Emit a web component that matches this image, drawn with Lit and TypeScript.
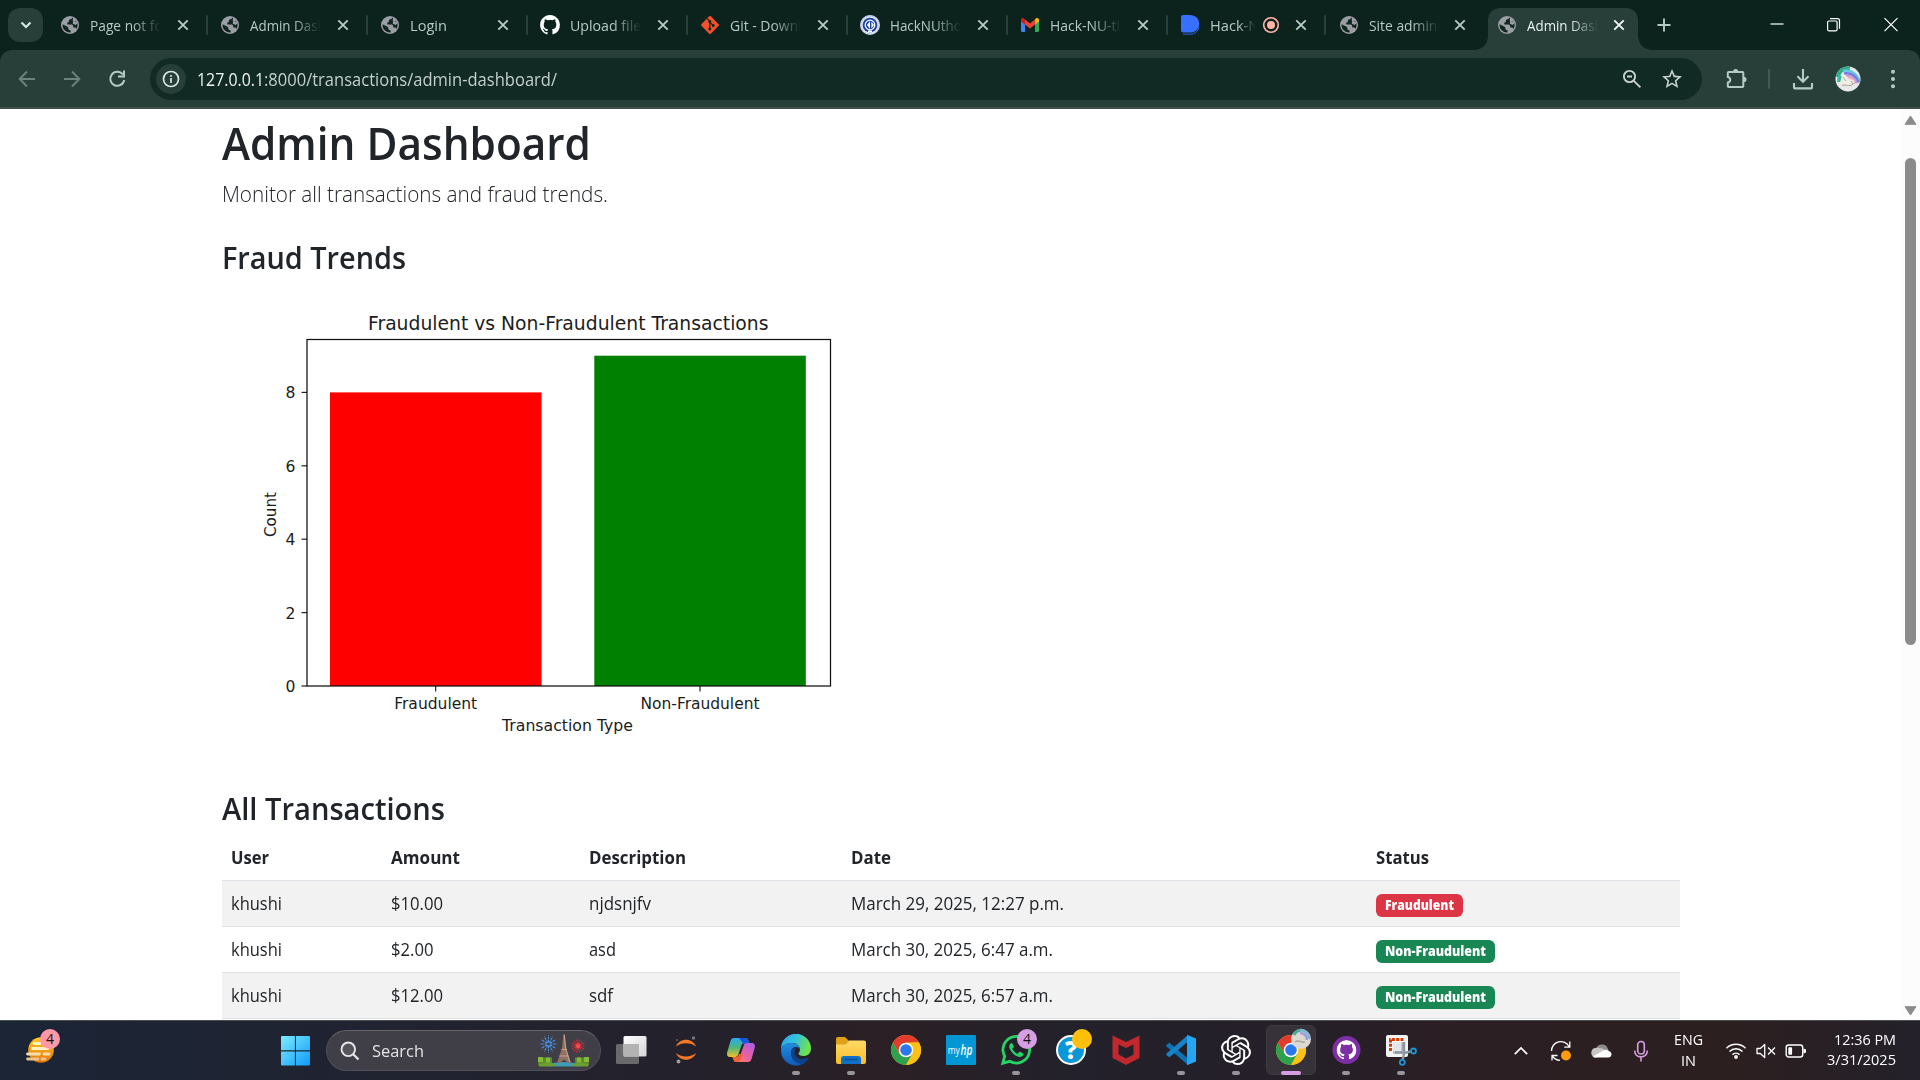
import { LitElement, html, css, svg } from "lit";
import { customElement, property } from "lit/decorators.js";
import { classMap } from "lit/directives/class-map.js";

/* Text set to an exact advance width, in px. */
@customElement("fit-text")
class FitText extends LitElement {
  @property({ type: Number }) w = 0;
  @property() text = "";
  static styles = css`
    :host { display: inline-block; white-space: pre; flex: none; vertical-align: top; }
    .t { display: inline-block; transform-origin: 0 50%; white-space: pre; }
  `;
  updated() {
    const t = this.renderRoot.querySelector(".t") as HTMLElement;
    t.style.transform = "none";
    const n = t.getBoundingClientRect().width;
    this.style.width = this.w + "px";
    t.style.transform = `scaleX(${this.w / n})`;
  }
  render() {
    return html`<span class="t">${this.text}</span>`;
  }
}

const GH =
  "M8 0C3.58 0 0 3.58 0 8c0 3.54 2.29 6.53 5.47 7.59.4.07.55-.17.55-.38 0-.19-.01-.82-.01-1.49-2.01.37-2.53-.49-2.69-.94-.09-.23-.48-.94-.82-1.13-.28-.15-.68-.52-.01-.53.63-.01 1.08.58 1.23.82.72 1.21 1.87.87 2.33.66.07-.52.28-.87.51-1.07-1.78-.2-3.64-.89-3.64-3.95 0-.87.31-1.59.82-2.15-.08-.2-.36-1.02.08-2.12 0 0 .67-.21 2.2.82.64-.18 1.32-.27 2-.27s1.36.09 2 .27c1.53-1.04 2.2-.82 2.2-.82.44 1.1.16 1.92.08 2.12.51.56.82 1.27.82 2.15 0 3.07-1.87 3.75-3.65 3.95.29.25.54.73.54 1.48 0 1.07-.01 1.93-.01 2.2 0 .21.15.46.55.38A8.01 8.01 0 0 0 16 8c0-4.42-3.58-8-8-8z";
const OPENAI =
  "M22.2819 9.8211a5.9847 5.9847 0 0 0-.5157-4.9108 6.0462 6.0462 0 0 0-6.5098-2.9A6.0651 6.0651 0 0 0 4.9807 4.1818a5.9847 5.9847 0 0 0-3.9977 2.9 6.0462 6.0462 0 0 0 .7427 7.0966 5.98 5.98 0 0 0 .511 4.9107 6.051 6.051 0 0 0 6.5146 2.9001A5.9847 5.9847 0 0 0 13.2599 24a6.0557 6.0557 0 0 0 5.7718-4.2058 5.9894 5.9894 0 0 0 3.9977-2.9001 6.0557 6.0557 0 0 0-.7475-7.0729zm-9.022 12.6081a4.4755 4.4755 0 0 1-2.8764-1.0408l.1419-.0804 4.7783-2.7582a.7948.7948 0 0 0 .3927-.6813v-6.7369l2.02 1.1686a.071.071 0 0 1 .038.052v5.5826a4.504 4.504 0 0 1-4.4945 4.4944zm-9.6607-4.1254a4.4708 4.4708 0 0 1-.5346-3.0137l.142.0852 4.783 2.7582a.7712.7712 0 0 0 .7806 0l5.8428-3.3685v2.3324a.0804.0804 0 0 1-.0332.0615L9.74 19.9502a4.4992 4.4992 0 0 1-6.1408-1.6464zM2.3408 7.8956a4.485 4.485 0 0 1 2.3655-1.9728V11.6a.7664.7664 0 0 0 .3879.6765l5.8144 3.3543-2.0201 1.1685a.0757.0757 0 0 1-.071 0l-4.8303-2.7865A4.504 4.504 0 0 1 2.3408 7.872zm16.5963 3.8558L13.1038 8.364 15.1192 7.2a.0757.0757 0 0 1 .071 0l4.8303 2.7913a4.4944 4.4944 0 0 1-.6765 8.1042v-5.6772a.79.79 0 0 0-.407-.667zm2.0107-3.0231l-.142-.0852-4.7735-2.7818a.7759.7759 0 0 0-.7854 0L9.409 9.2297V6.8974a.0662.0662 0 0 1 .0284-.0615l4.8303-2.7866a4.4992 4.4992 0 0 1 6.6802 4.66zM8.3065 12.863l-2.02-1.1638a.0804.0804 0 0 1-.038-.0567V6.0742a4.4992 4.4992 0 0 1 7.3757-3.4537l-.142.0805L8.704 5.459a.7948.7948 0 0 0-.3927.6813zm1.0976-2.3654l2.602-1.4998 2.6069 1.4998v2.9994l-2.5974 1.4997-2.6067-1.4997Z";

/* Tab favicons, 20x20. */
const fav: Record<string, unknown> = {
  globe: html`<svg width="20" height="20" viewBox="0 0 20 20"><circle cx="10" cy="10" r="9" fill="#9c9ea6"/><path d="M12.3 2.4c-.3 1.2-1.3 1.9-2.4 2-.9.1-1.1.9-1 1.7.1 1-.6 1.5-1.6 1.5v2h4c1.3 0 1.9.8 1.9 2v1h1.4c1 0 1.6.6 1.8 1.5a7.6 7.6 0 0 0 1.2-4.1 7.6 7.6 0 0 0-1.3-4.2c-.9.8-1.900 1-2.800.5-.9-.5-1-1.300-.6-2.100.3-.6.2-1.300-.6-1.800zM2.500 9.200l4.600 2.300c1.100.6 1.300 1.200 1.300 2.200 0 .9.6 1.200 1.400 1.300.7.1.9.8.9 2.500a7.600 7.600 0 0 1-8.200-8.300z" fill="#10271f"/><path d="M13.100 5.800c1 .9 2.400.9 3.500.1l1 2.400-2 1.700-2.800-1.200z" fill="#9c9ea6"/></svg>`,
  github: html`<svg width="20" height="20" viewBox="-.1 -.1 16.200 16.200"><path d=${GH} fill="#fff"/></svg>`,
  git: html`<svg width="20" height="20" viewBox="0 0 20 20"><rect x="3.300" y="3.300" width="13.400" height="13.400" rx="1.200" transform="rotate(45 10 10)" fill="#f4502a"/><g stroke="#10271f" stroke-width="1.200" fill="#10271f"><path d="M7.200 3.600l2.600 2.700v8M9.800 7.300l3.300 3.100" fill="none"/><circle cx="9.800" cy="6.600" r=".9"/><circle cx="9.800" cy="14" r=".9"/><circle cx="13.200" cy="10.400" r=".9"/></g></svg>`,
  hack: html`<svg width="20" height="20" viewBox="0 0 20 20"><circle cx="10" cy="10" r="10" fill="#dfe6f5"/><circle cx="10" cy="10" r="9" fill="none" stroke="#8ba2d8" stroke-width="1" stroke-dasharray="1 1"/><circle cx="10" cy="10" r="7.300" fill="#1b3f9c"/><circle cx="10" cy="10" r="4.800" fill="none" stroke="#fff" stroke-width="1.300"/><path d="M10 6v8l-3-4zM11.400 6.500v7L14 10z" fill="#fff"/><path d="M8 15.500h4v1.500h-4z" fill="#fff"/></svg>`,
  gmail: html`<svg width="20" height="20" viewBox="0 0 20 20"><path d="M1 6v9.500c0 .9.600 1.500 1.300 1.500H5V9z" fill="#4285f4"/><path d="M15 9v8h2.700c.8 0 1.300-.6 1.300-1.500V6z" fill="#34a853"/><path d="M15 4.500V9.600l4-3.200V5.100c0-1.800-1.900-2.600-3.200-1.500z" fill="#fbbc04"/><path d="M5 9.600V4.400l5 4 5-4v5.200l-5 4z" fill="#ea4335"/><path d="M1 5.100v1.300l4 3.200V4.400l-.9-.8C2.800 2.500 1 3.300 1 5.100z" fill="#c5221f"/></svg>`,
  devfolio: html`<svg width="20" height="20" viewBox="0 0 20 20"><path d="M3 0h7.500a8.200 8.200 0 0 1 0 17.600H3A2 2 0 0 1 1 15.600V2a2 2 0 0 1 2-2z" fill="#3770ff"/><path d="M3 19.200h8a8.600 8.600 0 0 0 8-7" fill="none" stroke="#2f62e2" stroke-width="1"/></svg>`,
};

const TABS = [
  { icon: "globe", title: "Page not found", w: 98 },
  { icon: "globe", title: "Admin Dashboard", w: 113 },
  { icon: "globe", title: "Login", w: 37 },
  { icon: "github", title: "Upload files", w: 78 },
  { icon: "git", title: "Git - Downloads", w: 103 },
  { icon: "hack", title: "HackNUthon", w: 80 },
  { icon: "gmail", title: "Hack-NU-thon", w: 92 },
  { icon: "devfolio", title: "Hack-NU", w: 60, rec: true },
  { icon: "globe", title: "Site administration", w: 122 },
  { icon: "globe", title: "Admin Dashboard", w: 113, active: true },
];

@customElement("tab-strip")
class TabStrip extends LitElement {
  static styles = css`
    :host { display: flex; height: 50px; background: #0c231d; padding-left: 8px; box-sizing: border-box; font-size: 15px; }
    .search { width: 35px; height: 34px; margin: 8px 5px 0 0; border-radius: 12px; background: #283f39; display: grid; place-items: center; }
    .tabs { display: grid; grid-template-columns: repeat(7, 160px) 159px 158px 155px; }
    .tab { display: flex; align-items: center; position: relative; padding: 0 0 0 11.500px; }
    .ico { width: 20px; height: 20px; }
    .title { margin-left: 10px; width: 71px; overflow: hidden; color: #b4cbc4; line-height: 22px; height: 22px;
      -webkit-mask-image: linear-gradient(90deg, #000 60%, transparent 100%); mask-image: linear-gradient(90deg, #000 60%, transparent 100%); }
    .rec .title { width: 46px; }
    .dot { margin: 0 0 0 6px; width: 18px; height: 18px; flex: none; }
    .close { margin-left: 15px; flex: none; }
    .rec .close { margin-left: 14.500px; }
    .tab:nth-child(9) .close, .active .close { margin-left: 13.500px; }
    .tab.sep::after { content: ""; width: 2px; height: 20px; border-radius: 1px; background: #26423a; margin-left: 16px; }
    .active { background: #283f39; border-radius: 12px 12px 0 0; margin: 8px 0 0 3px; height: 42px; padding: 0 0 8px 9px; box-sizing: border-box; width: 150px; }
    .active .title { color: #eaf2ef; }
    .active::before, .active::after { content: ""; position: absolute; bottom: 0; width: 13px; height: 13px; }
    .active::before { left: -13px; background: radial-gradient(circle at 0 0, transparent 12.5px, #283f39 13px); }
    .active::after { right: -13px; background: radial-gradient(circle at 100% 0, transparent 12.5px, #283f39 13px); }
    .plus { align-self: center; margin-left: 16px; }
    .win { margin-left: auto; display: flex; align-items: center; }
    .win svg { margin-right: 23px; width: 34px; height: 20px; }
    .win svg:last-child { margin-right: 12px; }
  `;
  render() {
    return html`
      <div class="search"><svg width="14" height="10" viewBox="0 0 14 10"><path d="M2.500 2.500L7 7l4.500-4.500" fill="none" stroke="#d5e5df" stroke-width="2.200"/></svg></div>
      <div class="tabs">
        ${TABS.map((t, i) => html`<div class=${classMap({ tab: true, rec: !!t.rec, active: !!t.active, sep: i < 8 })}>
          <span class="ico">${fav[t.icon]}</span>
          <span class="title"><fit-text .text=${t.title} .w=${t.w}></fit-text></span>
          ${t.rec ? html`<svg class="dot" viewBox="0 0 18 18"><circle cx="9" cy="9" r="7.300" fill="none" stroke="#ffb4a6" stroke-width="1.600"/><circle cx="9" cy="9" r="4" fill="#ffb4a6"/></svg>` : ""}
          <svg class="close" width="14" height="14" viewBox="0 0 14 14"><path d="M2.300 2.300l9.400 9.400M11.700 2.300l-9.400 9.400" stroke=${t.active ? "#f0f6f4" : "#b4cbc4"} stroke-width="1.900"/></svg>
        </div>`)}
      </div>
      <svg class="plus" width="16" height="16" viewBox="0 0 16 16"><path d="M8 1.500v13M1.500 8h13" stroke="#b4cbc4" stroke-width="1.900"/></svg>
      <div class="win">
        <svg viewBox="0 0 34 20"><path d="M10.500 9h13" stroke="#fff" stroke-width="1.200"/></svg>
        <svg viewBox="0 0 34 20"><g fill="none" stroke="#fff" stroke-width="1.200"><rect x="10.600" y="6" width="9.500" height="9.800" rx="1.200"/><path d="M13 3.700h7.500c1.200 0 2 .8 2 2v8"/></g></svg>
        <svg viewBox="0 0 34 20"><path d="M10.500 3.200l13 13M23.500 3.200l-13 13" stroke="#fff" stroke-width="1.200"/></svg>
      </div>`;
  }
}

@customElement("tool-bar")
class ToolBar extends LitElement {
  static styles = css`
    :host { display: flex; align-items: center; height: 59px; box-sizing: border-box; background: #283f39; border-bottom: 2px solid #414f49; padding: 0 0 0 15px;
      border-radius: 12px 12px 0 0; }
    svg { flex: none; display: block; }
    .nav { display: flex; gap: 21px; width: 135px; }
    .omni { width: 1552px; height: 42px; border-radius: 21px; background: #122a24; display: flex; align-items: center; margin-top: 1px; box-sizing: border-box; padding: 0 18px 0 6px; }
    .info { width: 30px; height: 30px; border-radius: 50%; background: #283f39; display: grid; place-items: center; margin-right: 11px; }
    .url { font-size: 17.500px; line-height: 24px; display: flex; color: #c3cfcb; }
    .host { color: #edf5f2; }
    .star { margin-left: 17px; }
    .zoom { margin-left: auto; }
    .right { display: flex; align-items: center; }
    .puz { margin-left: 23px; }
    .sep { width: 2px; height: 20px; background: #435a53; margin: 0 22px 0 19px; border-radius: 1px; }
    .av { margin-left: 21px; }
    .more { margin-left: 29px; }
  `;
  render() {
    return html`
      <div class="nav">
        <svg width="24" height="24" viewBox="0 0 24 24"><path d="M20 12H5M12 4.500L4.700 12l7.300 7.500" fill="none" stroke="#6c827b" stroke-width="1.900"/></svg>
        <svg width="24" height="24" viewBox="0 0 24 24"><path d="M4 12h15M12 4.500l7.300 7.500-7.300 7.500" fill="none" stroke="#6c827b" stroke-width="1.900"/></svg>
        <svg width="24" height="24" viewBox="0 0 24 24"><path d="M17.800 7.500A7 7 0 1 0 19.200 13" fill="none" stroke="#b4cbc4" stroke-width="2"/><path d="M19 3.500v6h-6" fill="none" stroke="#b4cbc4" stroke-width="2"/></svg>
      </div>
      <div class="omni">
        <div class="info"><svg width="18" height="18" viewBox="0 0 18 18"><circle cx="9" cy="9" r="7.500" fill="none" stroke="#d9e6e2" stroke-width="1.700"/><path d="M9 8v5M9 5v1.800" stroke="#d9e6e2" stroke-width="1.700"/></svg></div>
        <div class="url"><fit-text class="host" text="127.0.0.1" .w=${67}></fit-text><fit-text text=":8000/transactions/admin-dashboard/" .w=${293}></fit-text></div>
        <svg class="zoom" width="22" height="22" viewBox="0 0 22 22"><g fill="none" stroke="#c5d1cd" stroke-width="1.900"><circle cx="8.500" cy="8.500" r="5.600"/><path d="M12.600 12.600l6.800 6.800M6 8.500h5"/></g></svg>
        <svg class="star" width="24" height="24" viewBox="0 0 24 24"><path d="M22 9.240l-7.190-.62L12 2 9.190 8.630 2 9.240l5.460 4.730L5.820 21 12 17.270 18.180 21l-1.630-7.030L22 9.240zM12 15.400l-3.760 2.270 1-4.280-3.320-2.880 4.380-.38L12 6.100l1.710 4.040 4.380.38-3.320 2.880 1 4.280L12 15.400z" fill="#c5d1cd"/></svg>
      </div>
      <div class="right">
        <svg class="puz" width="24" height="24" viewBox="0 0 24 24"><path d="M3.500 5H17.600c.4 0 .7.300.7.700V19.300c0 .4-.3.700-.7.700H3.500c-.4 0-.7-.3-.7-.7V15.600c3.200-.5 3.200-5.200 0-5.700V5.700c0-.4.3-.7.700-.7z" fill="none" stroke="#b4cbc4" stroke-width="2"/><path d="M8 4.500a2.600 2.600 0 0 1 5.200 0zM18.800 9.700a2.700 2.700 0 0 1 0 5.400z" fill="#b4cbc4"/></svg>
        <span class="sep"></span>
        <svg width="22" height="24" viewBox="0 0 22 24"><g fill="none" stroke="#b4cbc4" stroke-width="2.100"><path d="M11 2v12.500M5.500 9.300l5.500 5.500 5.500-5.500M2 16v4.600c0 .5.300.8.800.8h16.400c.5 0 .8-.3.800-.8V16"/></g></svg>
        <svg class="av" width="26" height="26" viewBox="0 0 26 26"><defs><clipPath id="c"><circle cx="13" cy="13" r="12.500"/></clipPath></defs><g clip-path="url(#c)"><rect width="26" height="26" fill="#e9e9ea"/><g fill="none"><path d="M2 11C4 4 9 1 15 2" stroke="#2fae86" stroke-width="5"/><path d="M8 5c8-2 14 3 17 11" stroke="#63c7dd" stroke-width="2.500"/><path d="M9 7.500c7-1 12 3 14.500 9" stroke="#6f7be6" stroke-width="2.500"/><path d="M11 9.500c5 0 9 3 11 7.500" stroke="#c693d8" stroke-width="2.200"/><path d="M13 11.500c3.500.5 6 2.500 7 5.500" stroke="#f1b3bf" stroke-width="2"/></g><path d="M3 9l4 1-1 6H2z" fill="#37b6a0"/><path d="M7 9c4-1 5 2 5 4s4 2 6 1l2 3-7 2H7l-2-2z" fill="#f2efe6"/><path d="M7 19l9 .5 5-3.500M8 11l3 4M16 15l2 3" fill="none" stroke="#a9a494"/></g></svg>
        <svg class="more" width="6" height="22" viewBox="0 0 6 22"><g fill="#b4cbc4"><circle cx="3" cy="3.700" r="2"/><circle cx="3" cy="11" r="2"/><circle cx="3" cy="18.300" r="2"/></g></svg>
      </div>`;
  }
}

const BARS = [
  { label: "Fraudulent", value: 8, color: "#ff0000", x: 108, tick: 213.700, lw: 83 },
  { label: "Non-Fraudulent", value: 9, color: "#008000", x: 372.300, tick: 478, lw: 119 },
];
const UNIT = 36.700;

@customElement("fraud-chart")
class FraudChart extends LitElement {
  static styles = css`
    :host { display: block; height: 450px; }
    svg { display: block; }
    text { font-family: "DejaVu Sans", sans-serif; font-size: 15.600px; fill: #1c1c1c; }
    .title { font-size: 18.700px; }
  `;
  render() {
    return html`<svg width="675" height="450" viewBox="0 0 675 450">
      <text class="title" x="146" y="44" textLength="400.500" lengthAdjust="spacingAndGlyphs">Fraudulent vs Non-Fraudulent Transactions</text>
      ${BARS.map((b) => svg`<rect x=${b.x} y=${400 - b.value * UNIT} width="211.500" height=${b.value * UNIT} fill=${b.color}/>
        <path d="M${b.tick} 400v5.500" stroke="#222" stroke-width="1.200"/>
        <text x=${b.tick - b.lw / 2} y="423.300" textLength=${b.lw} lengthAdjust="spacingAndGlyphs">${b.label}</text>`)}
      ${[0, 2, 4, 6, 8].map((v) => svg`<path d="M79.500 ${400 - v * UNIT}H85" stroke="#222" stroke-width="1.200"/>
        <text x="73.500" y=${406 - v * UNIT} text-anchor="end">${v}</text>`)}
      <rect x="85" y="53.500" width="523.500" height="346.500" fill="none" stroke="#111" stroke-width="1.250"/>
      <text x="280" y="444.500" textLength="131" lengthAdjust="spacingAndGlyphs">Transaction Type</text>
      <text transform="translate(54 251) rotate(-90)" x="0" y="0" textLength="45" lengthAdjust="spacingAndGlyphs">Count</text>
    </svg>`;
  }
}

const HEAD: [string, number][] = [["User", 38], ["Amount", 69], ["Description", 97], ["Date", 40], ["Status", 53]];
const ROWS = [
  { cells: [["khushi", 51], ["$10.00", 52], ["njdsnjfv", 62], ["March 29, 2025, 12:27 p.m.", 213]] as [string, number][], fraud: true },
  { cells: [["khushi", 51], ["$2.00", 42.500], ["asd", 27], ["March 30, 2025, 6:47 a.m.", 202]] as [string, number][], fraud: false },
  { cells: [["khushi", 51], ["$12.00", 52], ["sdf", 24], ["March 30, 2025, 6:57 a.m.", 202]] as [string, number][], fraud: false },
];

@customElement("dashboard-page")
class DashboardPage extends LitElement {
  static styles = css`
    :host { display: flex; justify-content: space-between; height: 911px; overflow: hidden; background: #fff; color: #212529; }
    .main { width: 1458px; margin-left: 222px; padding-top: 7px; }
    h1, h2, p { margin: 0; }
    h1 { font-size: 44.500px; line-height: 54px; font-weight: 600; height: 54px; }
    p { font-size: 22.500px; line-height: 34px; height: 34px; font-weight: 300; margin-top: 7px; }
    h2 { font-size: 31px; line-height: 38px; height: 38px; font-weight: 600; }
    .trends { margin: 27px 0 10px; }
    .all { margin: 53px 0 8px; }
    .row { display: grid; grid-template-columns: 160px 198px 262px 525px 1fr; height: 45px; border-bottom: 1px solid #dee2e6; font-size: 17.500px; line-height: 27px; }
    .row > * { padding: 9px 8.500px; }
    .row > :last-child { padding: 9px; }
    .head { font-weight: 700; }
    .odd { background: #f2f2f2; }
    .badge { display: inline-block; height: 23px; border-radius: 6px; background: #198754; color: #fff; font-size: 13.300px; font-weight: 800; line-height: 23px; padding: 0 9px; margin-top: 4px; vertical-align: top; }
    .bad { background: #dc3545; }
    .bar { width: 19px; background: #fcfcfc; display: flex; flex-direction: column; align-items: center; }
    .up { margin-top: 6px; }
    .thumb { width: 11px; height: 487px; border-radius: 6px; background: #8b8b8b; margin-top: 33px; }
    .down { margin-top: auto; margin-bottom: 4px; }
  `;
  render() {
    return html`
      <div class="main">
        <h1><fit-text text="Admin Dashboard" .w=${369}></fit-text></h1>
        <p><fit-text text="Monitor all transactions and fraud trends." .w=${386}></fit-text></p>
        <h2 class="trends"><fit-text text="Fraud Trends" .w=${184}></fit-text></h2>
        <fraud-chart></fraud-chart>
        <h2 class="all"><fit-text text="All Transactions" .w=${223}></fit-text></h2>
        <div class="row head">${HEAD.map(([t, w]) => html`<div><fit-text .text=${t} .w=${w}></fit-text></div>`)}</div>
        ${ROWS.map((r, i) => html`<div class=${classMap({ row: true, odd: i % 2 === 0 })}>
          ${r.cells.map(([t, w]) => html`<div><fit-text .text=${t} .w=${w}></fit-text></div>`)}
          <div><span class=${classMap({ badge: true, bad: r.fraud })}><fit-text .text=${r.fraud ? "Fraudulent" : "Non-Fraudulent"} .w=${r.fraud ? 69 : 101}></fit-text></span></div>
        </div>`)}
      </div>
      <div class="bar">
        <svg class="up" width="13" height="10" viewBox="0 0 13 10"><path d="M6.500 1L12 9.300H1z" fill="#8b8b8b" stroke="#8b8b8b" stroke-linejoin="round"/></svg>
        <div class="thumb"></div>
        <svg class="down" width="13" height="10" viewBox="0 0 13 10"><path d="M6.500 9L12 .7H1z" fill="#8b8b8b" stroke="#8b8b8b" stroke-linejoin="round"/></svg>
      </div>`;
  }
}

const chrome = html`<svg width="32" height="32" viewBox="0 0 32 32"><circle cx="16" cy="16" r="15" fill="#fbc116"/><path d="M3 8.500A15 15 0 0 0 16 31l6.500-11.300L16 16 9.500 19.700z" fill="#2da14c"/><path d="M3 8.500l6.500 11.300L13 14l3-5.500h13A15 15 0 0 0 3 8.500z" fill="#e33b2e"/><path d="M16 31l6.500-11.200L22 12l-1-3.500h8A15 15 0 0 1 16 31z" fill="#fbc116"/><circle cx="16" cy="16" r="7.300" fill="#fff"/><circle cx="16" cy="16" r="5.800" fill="#2b78ee"/></svg>`;

/* Taskbar app icons, 32x32. */
const APPS: { icon: unknown; run?: boolean; focus?: boolean; badge?: string; badgeClass?: string }[] = [
  { icon: html`<svg width="32" height="32" viewBox="0 0 32 32"><defs><linearGradient id="tv" x1="0" y1="0" x2="1" y2="1"><stop offset="0" stop-color="#fff"/><stop offset="1" stop-color="#d5d5d5"/></linearGradient></defs><rect x="1" y="10" width="23" height="20" rx="1.500" fill="#6a6a6c"/><rect x="8.500" y="2" width="23" height="20.500" rx="1.500" fill="url(#tv)"/><path d="M8.500 10H24v12.500H10a1.500 1.500 0 0 1-1.500-1.500z" fill="#b3b3b4"/></svg>` },
  { icon: html`<svg width="32" height="32" viewBox="0 0 32 32"><path d="M6 12.500c3-9 17-9 20 0-5-4.500-15-4.500-20 0zM6 19c3 9 17 9 20 0-5 4.500-15 4.500-20 0z" fill="#f37726"/><circle cx="23.500" cy="4" r="1.700" fill="#767677"/><circle cx="7" cy="6" r="1.100" fill="#616262"/><circle cx="8.500" cy="27.500" r="1.900" fill="#9e9e9e"/></svg>` },
  { icon: html`<svg width="32" height="32" viewBox="0 0 32 32"><defs><linearGradient id="c1" x1="0" y1="0" x2="0" y2="1"><stop offset="0" stop-color="#2aa8f5"/><stop offset=".5" stop-color="#4cb97a"/><stop offset="1" stop-color="#f2c02c"/></linearGradient><linearGradient id="c2" x1="1" y1="0" x2="0" y2="1"><stop offset="0" stop-color="#a45cf0"/><stop offset=".5" stop-color="#e65fa6"/><stop offset="1" stop-color="#fb8a50"/></linearGradient></defs><path d="M9 4h11c2 0 3 1 3.600 3L24.500 9H20l-3 1-3.500 10c-.7 2-1.500 3-3.500 3H5.500C2.500 23 1.500 21 2.300 18L5.500 7C6.200 5 7 4 9 4z" fill="url(#c1)"/><path d="M14 4h6c2 0 3 1 3.600 3L25 11h-4c-2 0-3-.5-3.500-2.500z" fill="#1b55d8"/><path d="M23 28H12c-2 0-3-1-3.600-3L7.500 23H12l3-1 3.500-10c.7-2 1.500-3 3.500-3h4.500c3 0 4 2 3.200 5L26.500 25c-.7 2-1.500 3-3.500 3z" fill="url(#c2)"/><path d="M10 28c-2-1-1.500-4-3-5h4c2 0 2.500-1 3-3h4l-2 5c-1 2-2 3-4 3z" fill="#f0603c"/></svg>` },
  { run: true, icon: html`<svg width="32" height="32" viewBox="0 0 32 32"><defs><linearGradient id="e1" x1="0" y1="0" x2="1" y2=".3"><stop offset="0" stop-color="#2ba6e8"/><stop offset=".5" stop-color="#33c1e0"/><stop offset="1" stop-color="#6fe24e"/></linearGradient><linearGradient id="e2" x1="0" y1="0" x2="0" y2="1"><stop offset="0" stop-color="#1f8fe0"/><stop offset="1" stop-color="#1059b8"/></linearGradient></defs><path d="M1 15A15 15 0 0 1 31 14.500c0 5-3.500 7.500-7.500 7.500-3 0-5-1-5-2.500 0-.8 1.500-1.500 1.500-4C20 12 17 9 12 9 6 9 2 12 1 15z" fill="url(#e1)"/><path d="M1 16C1.500 12 6 9 11 9c5.500 0 9 3 9 6.500-1-2-2.500-2.500-4-2.500-3 0-5 2.500-5 6 0 6 5 9.500 10 9.500 2 0 4-.5 5.500-1.200A15 15 0 0 1 1 16z" fill="url(#e2)"/><path d="M12 15c-2 6 0 14 9 15 3-.5 6-2.500 7.700-5.500.3-.6-.2-1-.9-.7-7 2.800-13 .2-13-5.300 0-2 .7-3.500 1.200-4.500z" fill="#0c4287"/></svg>` },
  { run: true, icon: html`<svg width="32" height="32" viewBox="0 0 32 32"><defs><linearGradient id="f1" x1="0" y1="0" x2="0" y2="1"><stop offset="0" stop-color="#ffdb66"/><stop offset="1" stop-color="#fbbc28"/></linearGradient></defs><path d="M1 5a2 2 0 0 1 2-2h7l3.500 3.500V12H1z" fill="#e0a11b"/><path d="M1 10.500h10l3-4h15a2 2 0 0 1 2 2V28a2 2 0 0 1-2 2H3a2 2 0 0 1-2-2z" fill="url(#f1)"/><path d="M6 30v-5a3 3 0 0 1 3-3h14a3 3 0 0 1 3 3v5z" fill="#1070c8"/><path d="M9.500 25.500h13" stroke="#0a4c96" stroke-width="1.500"/></svg>` },
  { icon: chrome },
  { icon: html`<svg width="32" height="32" viewBox="0 0 32 32"><rect x="1" y="1" width="30" height="30" rx="1" fill="#0396d4"/><text x="2.800" y="20" font-family="Open Sans, sans-serif" font-size="10" font-weight="500" fill="#fff" textLength="12" lengthAdjust="spacingAndGlyphs">my</text><text x="15.500" y="20.500" font-family="Open Sans, sans-serif" font-size="15" font-style="italic" font-weight="600" fill="#fff" textLength="12" lengthAdjust="spacingAndGlyphs">hp</text></svg>` },
  { run: true, badge: "4", icon: html`<svg width="32" height="32" viewBox="0 0 32 32"><path d="M2.800 29.200l1.900-7A13.300 13.300 0 1 1 9.800 27.300z" fill="none" stroke="#25d366" stroke-width="2.800"/><path d="M11.500 9c-.6 0-2.500 1.300-2.200 4 .5 4 5.700 9.500 10 10 2.500.2 4-1.500 4.200-2.700 0-.8-3.500-2.700-4.200-2.400-.7.300-1.200 1.800-1.900 1.700-1.700-.3-4.400-3-5-4.600-.2-.7 1.300-1.300 1.400-2.100 0-.8-1.300-3.900-2.300-3.900z" fill="#25d366"/></svg>` },
  { badge: "", badgeClass: "yellow", icon: html`<svg width="32" height="32" viewBox="0 0 32 32"><circle cx="16" cy="16" r="14" fill="#0b96d6" stroke="#fff" stroke-width="2"/><text x="16" y="25" text-anchor="middle" font-family="Open Sans, sans-serif" font-size="24" font-weight="800" fill="#fff">?</text></svg>` },
  { icon: html`<svg width="32" height="32" viewBox="0 0 32 32"><path d="M2.500 1.500L16 8l13.500-6.500V24L16 31 2.500 24zM8.500 10.500v10L16 24.500l7.500-4v-10L16 14z" fill="#c0282d" fill-rule="evenodd"/></svg>` },
  { run: true, icon: html`<svg width="32" height="32" viewBox="0 0 32 32"><path d="M2 10.500l2.500-1.700L23 24.500V31L1.500 12.500c-.5-.7-.2-1.400.5-2z" fill="#0d73b8"/><path d="M2 21.500l2.500 1.700L23 7.500V1L1.500 19.500c-.5.7-.2 1.400.5 2z" fill="#1583ca"/><path d="M22.500 1L31 4.500v23L22.500 31c-.8-.2-.5-1-.5-2V3c0-1-.3-1.800.5-2z" fill="#25a6f2"/></svg>` },
  { run: true, icon: html`<svg width="32" height="32" viewBox="-.8 -.8 25.600 25.600"><path d=${OPENAI} fill="#fff"/></svg>` },
  { focus: true, icon: chrome },
  { run: true, icon: html`<svg width="32" height="32" viewBox="0 0 32 32"><circle cx="16.500" cy="16" r="14" fill="#7d2fa6"/><g transform="translate(6.500 6) scale(1.250)"><path d=${GH} fill="#fff"/></g><circle cx="16.500" cy="16" r="11" fill="none" stroke="#7d2fa6" stroke-width="2"/></svg>` },
  { run: true, icon: html`<svg width="32" height="32" viewBox="0 0 32 32"><rect x="1" y="1" width="22" height="22" rx="2" fill="#f1f3f5"/><path d="M5.500 17V5.500H19" fill="none" stroke="#d83b01" stroke-width="3" stroke-dasharray="3 1.300"/><path d="M8 8.500h9V18H8z" fill="#e3e5e8"/><path d="M17.500 8v9M8 18.500h9" stroke="#a5acb3" stroke-width="2"/><path d="M19 8v12l-1.500 6M10 18.500h12l5-1.500" fill="none" stroke="#8e979f" stroke-width="2.400"/><circle cx="28.500" cy="17" r="2.500" fill="none" stroke="#1d94d6" stroke-width="1.800"/><circle cx="17.300" cy="28.300" r="2.500" fill="none" stroke="#1d94d6" stroke-width="1.800"/></svg>` },
];

const rays = (cx: number, cy: number, r: number, n: number, c: string) =>
  svg`<g stroke=${c} stroke-width="1.100">${Array.from({ length: n }, (_, i) => {
    const a = (i * 2 * Math.PI) / n;
    return svg`<line x1=${cx + Math.cos(a) * 1.500} y1=${cy + Math.sin(a) * 1.500} x2=${cx + Math.cos(a) * r} y2=${cy + Math.sin(a) * r} stroke-dasharray="2.500 .8"/>`;
  })}</g>`;

@customElement("task-bar")
class TaskBar extends LitElement {
  static styles = css`
    :host { display: flex; height: 60px; box-sizing: border-box; border-top: 1px solid #4a4e50; color: #fff;
      background: linear-gradient(90deg, #1b2536 0%, #212330 22%, #24212b 38%, #2b2025 46%, #23212b 56%, #251f28 68%, #2c1f24 76%, #2c1f20 90%, #24212a 100%); }
    svg { display: block; flex: none; }
    .widget { margin: 8px 0 0 24px; width: 38px; height: 38px; }
    .start { margin: 15px 0 0 219px; }
    .search { margin: 9px 2px 0 16px; width: 275px; height: 41px; box-sizing: border-box; border-radius: 21px; background: #403e46; border: 1px solid #504f57; border-top-color: #68666c; display: flex; align-items: center; padding: 0 9px 0 13px; font-size: 17px; color: #e4e4e6; line-height: 24px; }
    .search fit-text { margin: 0 auto 0 12px; }
    .apps { display: flex; }
    .app { width: 55px; height: 59px; display: flex; justify-content: center; padding-top: 13px; box-sizing: border-box; position: relative; }
    .run::after { content: ""; position: absolute; left: 24px; top: 50px; width: 8px; height: 4px; border-radius: 2px; background: #97959a; }
    .focus::before { content: ""; position: absolute; left: 2.500px; top: 4px; width: 50px; height: 50px; box-sizing: border-box; border-radius: 6px; background: #37323a; border: 1px solid #3f3a41; }
    .focus::after { content: ""; position: absolute; left: 18px; top: 50px; width: 20px; height: 4px; border-radius: 2px; background: #d79fe3; }
    .focus svg { position: relative; }
    .badge { position: absolute; left: 29px; top: 8px; width: 20px; height: 20px; border-radius: 50%; background: #d79fe3; color: #111; font-size: 14px; line-height: 20px; text-align: center; }
    .yellow { background: #ffbf0d; }
    .focus .av { position: absolute; left: 27px; top: 7px; }
    .tray { margin-left: auto; display: flex; align-items: center; padding-right: 24px; font-size: 15px; line-height: 20px; }
    .lang { width: 30px; margin: 0 22px 2px 24px; display: flex; flex-direction: column; align-items: center; line-height: 21px; }
    .clock { margin: 0 0 3px 20px; width: 69px; display: flex; flex-direction: column; align-items: flex-end; }
    .sync { margin-left: 21px; }
    .cloud { margin-left: 19px; }
    .mic { margin-left: 21px; }
    .s { margin-left: 9px; }
  `;
  render() {
    return html`
      <svg class="widget" viewBox="0 0 38 38"><defs><linearGradient id="w" x1="0" y1="0" x2="0" y2="1"><stop offset="0" stop-color="#ffcf21"/><stop offset="1" stop-color="#e8720c"/></linearGradient></defs><circle cx="17" cy="21" r="12.800" fill="url(#w)"/><g stroke-width="2.800" stroke-linecap="round"><path d="M10 14.500h6M8.500 19.500H24" stroke="#fff3c4"/><path d="M3.500 25h12M20 25h5" stroke="#f6dfae"/><path d="M3.500 30H14M18 30h3" stroke="#e8c48e"/></g><circle cx="26" cy="10" r="10" fill="#ff98a7"/><text x="26" y="15" text-anchor="middle" font-size="14" font-family="Open Sans, sans-serif" fill="#111">4</text></svg>
      <svg class="start" width="29" height="30" viewBox="0 0 29 30"><defs><linearGradient id="s" x1="0" y1="0" x2="1" y2="1"><stop offset="0" stop-color="#7cebff"/><stop offset="1" stop-color="#109bf8"/></linearGradient></defs><path d="M1 0H13.900V14.300H0V1A1 1 0 0 1 1 0zM15 0h13a1 1 0 0 1 1 1V14.300H15zM0 15.400H13.900V29.500H1a1 1 0 0 1-1-1zM15 15.400H29V28.500a1 1 0 0 1-1 1H15z" fill="url(#s)"/></svg>
      <div class="search">
        <svg width="20" height="20" viewBox="0 0 20 20"><circle cx="8.300" cy="8.300" r="6.800" fill="#56545b" stroke="#e6e6e8" stroke-width="1.900"/><path d="M13 13l5.500 5.500" stroke="#e6e6e8" stroke-width="2.300"/></svg>
        <fit-text text="Search" .w=${52}></fit-text>
        <svg width="54" height="34" viewBox="0 0 54 34"><path d="M8 31q18-6 38 0l-6 1.500H12z" fill="#3d9cb4"/><path d="M1 23.500h14v6H1zM38 23.500h14v6H38z" fill="#5c8f2a"/><path d="M1 23h5v5H1zM9 23.500h4v5H9zM40 23.500h4v5h-4zM47 23h5v5h-5z" fill="#83ba3c"/><path d="M1 29.500l12-1 8 3-10 1H2zM52 29.500l-12-1-6 3 8 1h9z" fill="#6f9e33"/><path d="M26.500 0l1 0 1.500 14 5 15h-4c-1-4-5-4-6 0h-4l5-15z" fill="#8f7062"/><path d="M27.300 1l1.500 14 4 13M24.500 15.500h5.500M22.500 22h9" stroke="#cda08c" stroke-width="1.100" fill="none"/>${rays(11.500, 10, 8.500, 12, "#4d95e6")}${rays(41, 12, 6.500, 14, "#d8323a")}<circle cx="41" cy="12" r="2" fill="#ff4a4f"/></svg>
      </div>
      <div class="apps">
        ${APPS.map((a) => html`<div class=${classMap({ app: true, run: !!a.run, focus: !!a.focus })}>
          ${a.icon}
          ${a.badge !== undefined ? html`<span class="badge ${a.badgeClass ?? ""}">${a.badge}</span>` : ""}
          ${a.focus ? html`<svg class="av" width="22" height="22" viewBox="0 0 22 22"><circle cx="11" cy="11" r="10" fill="#dcd9d3"/><path d="M4 7a9 9 0 0 1 8-5" stroke="#48ad94" stroke-width="3" fill="none"/><path d="M10 2c5 0 9 4 9.500 9" stroke="#79b8d8" stroke-width="2.500" fill="none"/><path d="M10 5c4 0 7 3 7 7" stroke="#a79add" stroke-width="2.500" fill="none"/><path d="M5 14c4-3 6 1 10 0" stroke="#aaa59b" stroke-width="1.500" fill="none"/></svg>` : ""}
        </div>`)}
      </div>
      <div class="tray">
        <svg width="16" height="20" viewBox="0 0 16 20"><path d="M1.800 13.200L8 7l6.200 6.200" fill="none" stroke="#fff" stroke-width="1.700"/></svg>
        <svg class="sync" width="22" height="22" viewBox="0 0 22 22"><path d="M1.500 11A9.300 9.300 0 0 1 19 6.500M19.800 1.500v5.700h-5.500M7.500 15.500H2v5M2.300 15.800A9.500 9.500 0 0 0 10 20.300" fill="none" stroke="#fff" stroke-width="1.300"/><circle cx="16" cy="15.500" r="5" fill="#ff9b0e"/></svg>
        <svg class="cloud" width="21" height="16" viewBox="0 0 21 16"><path d="M5 6A6.300 6.300 0 0 1 17 6l2 4H4z" fill="#8d8a8c"/><path d="M5.500 4.800C1.500 4.800.3 8 .3 9.800c0 2.700 2 4.800 5 4.800l9-7.300C12 5 8.500 4.300 5.500 4.800z" fill="#c7c5c6"/><path d="M12.500 7.400c2-1 4-.7 5 .7 2.200.5 3 1.800 3 3.200 0 2-1.300 3.300-3.500 3.300H4.500c-1.200 0-2-.5-2.700-1.200z" fill="#fff"/></svg>
        <svg class="mic" width="16" height="22" viewBox="0 0 16 22"><rect x="4.700" y="1.500" width="6.600" height="12.500" rx="3.300" fill="none" stroke="#d79fe3" stroke-width="1.600"/><path d="M1.700 10.500c0 8.500 12.600 8.500 12.600 0M8 17v4.500" fill="none" stroke="#d79fe3" stroke-width="1.600"/></svg>
        <div class="lang"><fit-text text="ENG" .w=${29}></fit-text><fit-text text="IN" .w=${15}></fit-text></div>
        <svg width="22" height="18" viewBox="0 0 22 18"><g fill="none" stroke="#fff" stroke-width="1.500"><path d="M1.500 6.300a13.300 13.300 0 0 1 19 0M4.500 9.500a9 9 0 0 1 13 0M7.500 12.600a5 5 0 0 1 7 0"/></g><circle cx="11" cy="15" r="1.900" fill="#fff"/></svg>
        <svg class="s" width="20" height="18" viewBox="0 0 20 18"><path d="M1 6.500h3.300L8.700 2.500v13L4.300 11.500H1z" fill="none" stroke="#fff" stroke-width="1.300" stroke-linejoin="round"/><path d="M12 5.500l7 7M19 5.500l-7 7" stroke="#fff" stroke-width="1.300"/></svg>
        <svg class="s" width="22" height="16" viewBox="0 0 22 16"><rect x="1.200" y="2" width="16.500" height="12" rx="2.500" fill="none" stroke="#fff" stroke-width="1.400"/><rect x="3.300" y="4.200" width="3.800" height="7.600" rx=".8" fill="#fff"/><path d="M18.500 5.500l2.500 1v3l-2.500 1z" fill="#fff"/></svg>
        <div class="clock"><fit-text text="12:36 PM" .w=${62}></fit-text><fit-text text="3/31/2025" .w=${69}></fit-text></div>
      </div>`;
  }
}

@customElement("app-root")
class AppRoot extends LitElement {
  static styles = css`
    :host { display: flex; flex-direction: column; width: 1920px; height: 1080px; overflow: hidden; background: #0c231d; font-family: "Open Sans", "Noto Sans", sans-serif; }
  `;
  render() {
    return html`<tab-strip></tab-strip><tool-bar></tool-bar><dashboard-page></dashboard-page><task-bar></task-bar>`;
  }
}
